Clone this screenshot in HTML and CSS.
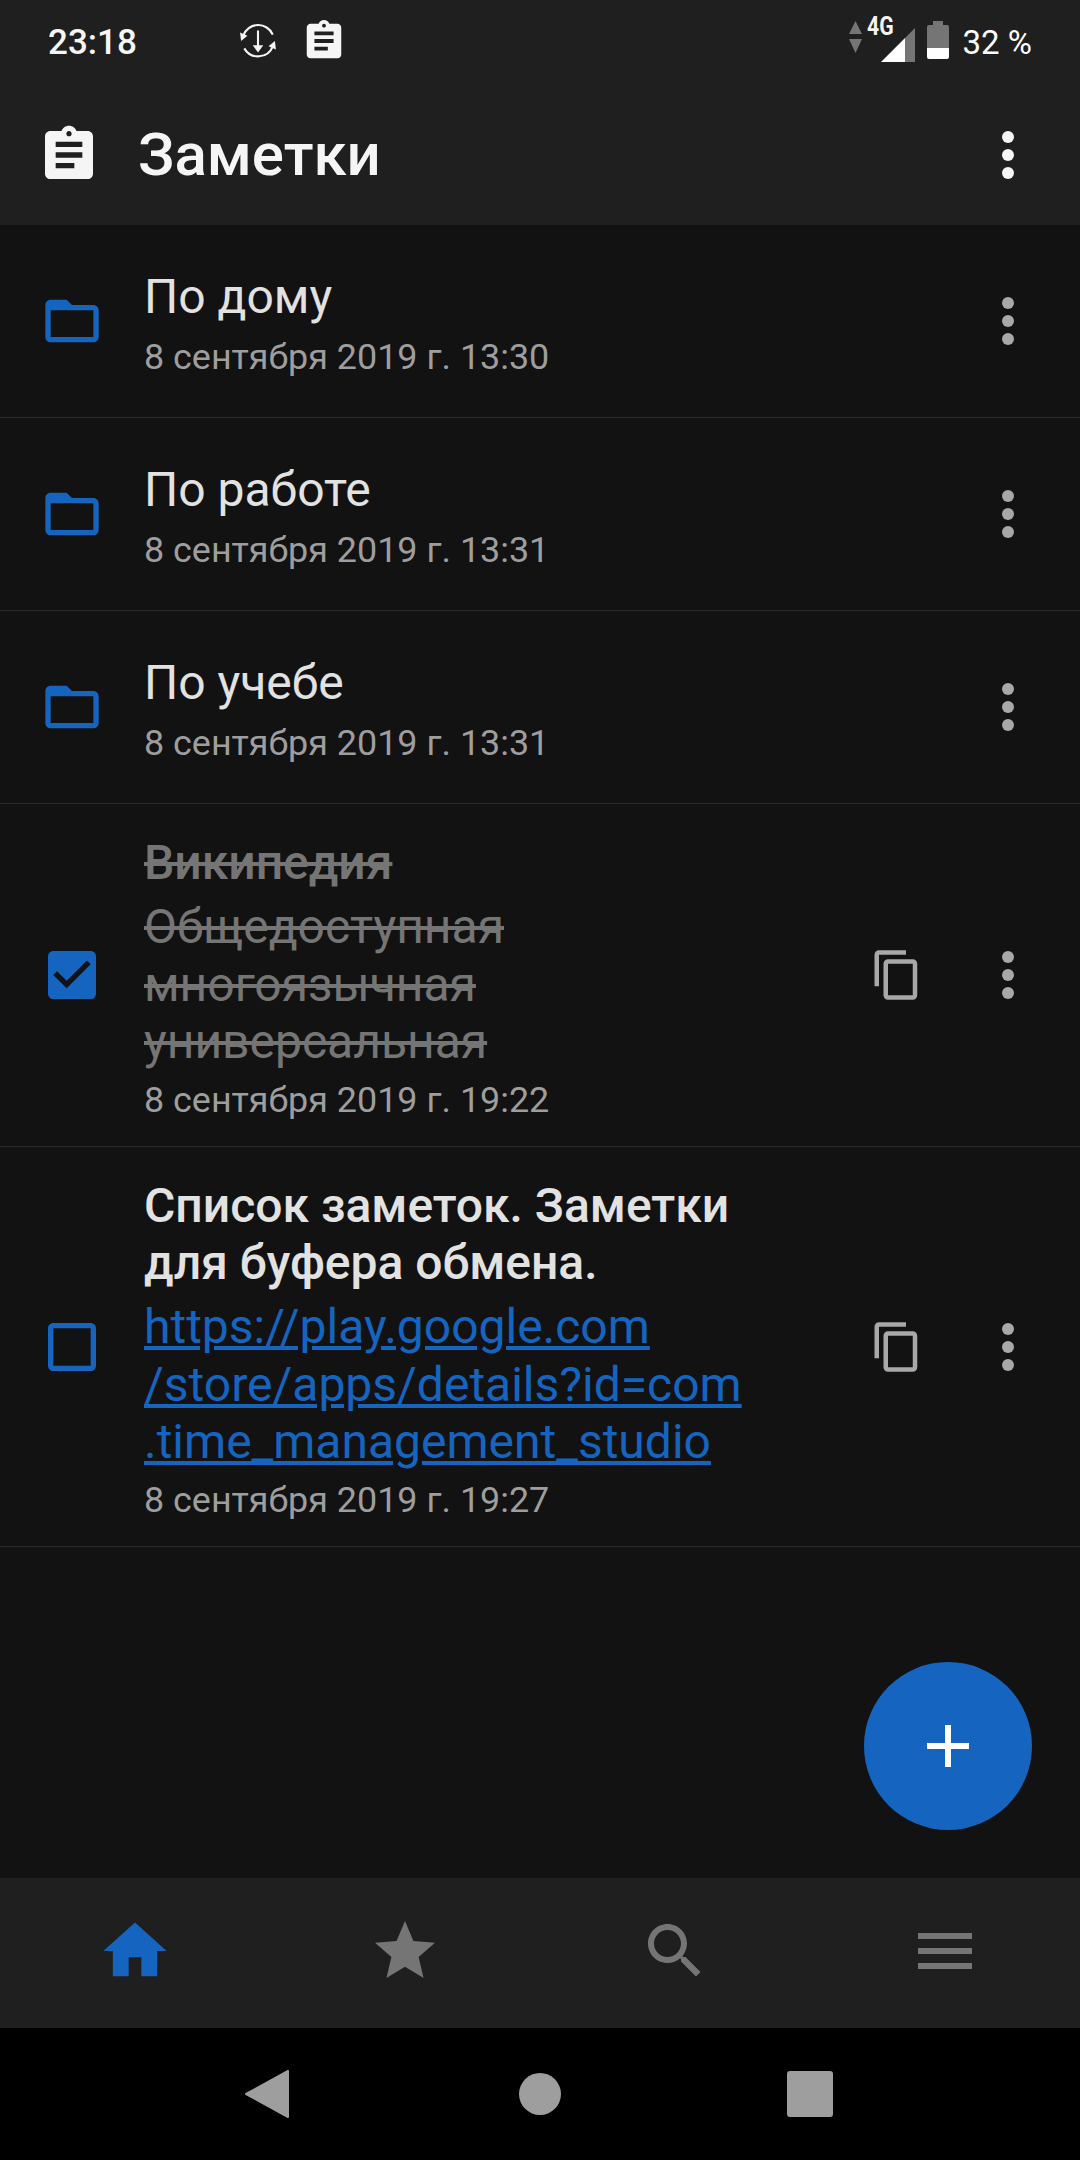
FILE: index.html
```html
<!DOCTYPE html>
<html>
<head>
<meta charset="utf-8">
<title>Заметки</title>
<link rel="stylesheet" href="styles.css">
</head>
<body>
<div id="main">

<div class="top">
  <div class="status">
    <span class="time">23:18</span>
    <svg class="ic-sync" viewBox="0 0 36 36" width="38" height="38">
      <path d="M4 13A15 15 0 0 1 32 12" fill="none" stroke="#f5f5f5" stroke-width="2"/>
      <path d="M32 23A15 15 0 0 1 5 25" fill="none" stroke="#f5f5f5" stroke-width="2"/>
      <path d="M1 10l7 3-6 5zM35 26l-7-3 6-5z" fill="#f5f5f5"/>
      <path d="M18 8v18" stroke="#f5f5f5" stroke-width="2"/>
      <path d="M13 22h10l-5 7z" fill="#f5f5f5"/>
    </svg>
    <svg class="ic-clip" viewBox="0 0 24 24" width="46" height="46"><path fill="#f5f5f5" d="M19 3h-4.180C14.400 1.840 13.300 1 12 1c-1.300 0-2.400.84-2.820 2H5c-1.100 0-2 .9-2 2v14c0 1.100.9 2 2 2h14c1.100 0 2-.9 2-2V5c0-1.100-.9-2-2-2zm-7 0c.55 0 1 .45 1 1s-.45 1-1 1-1-.45-1-1 .45-1 1-1zm2 14H7v-2h7v2zm3-4H7v-2h10v2zm0-4H7V7h10v2z"/></svg>
    <span class="spacer"></span>
    <svg class="ic-updown" viewBox="0 0 13 32" width="13" height="32"><path fill="#757575" d="M6.500 0L13 13H0zM0 18h13L6.500 32z"/></svg>
    <span class="net">
      <span class="fourg">4G</span>
      <svg class="ic-signal" viewBox="0 0 34 34" width="34" height="34">
        <path fill="#757575" d="M34 0V34H24V10z"/>
        <path fill="#ffffff" d="M24 10V34H0z"/>
      </svg>
    </span>
    <svg class="ic-batt" viewBox="0 0 22 38" width="22" height="38">
      <path fill="#757575" d="M6 0h10v4h4q2 0 2 2v22H0V6q0-2 2-2h4z"/>
      <path fill="#ffffff" d="M0 27h22v9q0 2-2 2H2q-2 0-2-2z"/>
    </svg>
    <span class="pct">32 %</span>
  </div>
  <div class="appbar">
    <svg class="ic-app" viewBox="0 0 24 24" width="64" height="64"><path fill="#f5f5f5" d="M19 3h-4.180C14.400 1.840 13.300 1 12 1c-1.300 0-2.400.84-2.820 2H5c-1.100 0-2 .9-2 2v14c0 1.100.9 2 2 2h14c1.100 0 2-.9 2-2V5c0-1.100-.9-2-2-2zm-7 0c.55 0 1 .45 1 1s-.45 1-1 1-1-.45-1-1 .45-1 1-1zm2 14H7v-2h7v2zm3-4H7v-2h10v2zm0-4H7V7h10v2z"/></svg>
    <span class="apptitle">Заметки</span>
    <svg class="more" viewBox="0 0 24 24" width="72" height="72"><circle cx="12" cy="6" r="2" fill="#f5f5f5"/><circle cx="12" cy="12" r="2" fill="#f5f5f5"/><circle cx="12" cy="18" r="2" fill="#f5f5f5"/></svg>
  </div>
</div>

<div class="list">

  <div class="row">
    <svg class="lead" viewBox="0 0 24 24" width="64" height="64"><path fill="#1565c0" d="M20 6h-8l-2-2H4c-1.100 0-1.990.9-1.990 2L2 18c0 1.100.9 2 2 2h16c1.100 0 2-.9 2-2V8c0-1.100-.9-2-2-2zm0 12H4V8h16v10z"/></svg>
    <div class="body">
      <div class="title">По дому</div>
      <div class="date">8 сентября 2019 г. 13:30</div>
    </div>
    <svg class="more" viewBox="0 0 24 24" width="72" height="72"><circle cx="12" cy="6" r="2" fill="#a8a8a8"/><circle cx="12" cy="12" r="2" fill="#a8a8a8"/><circle cx="12" cy="18" r="2" fill="#a8a8a8"/></svg>
  </div>

  <div class="row">
    <svg class="lead" viewBox="0 0 24 24" width="64" height="64"><path fill="#1565c0" d="M20 6h-8l-2-2H4c-1.100 0-1.990.9-1.990 2L2 18c0 1.100.9 2 2 2h16c1.100 0 2-.9 2-2V8c0-1.100-.9-2-2-2zm0 12H4V8h16v10z"/></svg>
    <div class="body">
      <div class="title">По работе</div>
      <div class="date">8 сентября 2019 г. 13:31</div>
    </div>
    <svg class="more" viewBox="0 0 24 24" width="72" height="72"><circle cx="12" cy="6" r="2" fill="#a8a8a8"/><circle cx="12" cy="12" r="2" fill="#a8a8a8"/><circle cx="12" cy="18" r="2" fill="#a8a8a8"/></svg>
  </div>

  <div class="row">
    <svg class="lead" viewBox="0 0 24 24" width="64" height="64"><path fill="#1565c0" d="M20 6h-8l-2-2H4c-1.100 0-1.990.9-1.990 2L2 18c0 1.100.9 2 2 2h16c1.100 0 2-.9 2-2V8c0-1.100-.9-2-2-2zm0 12H4V8h16v10z"/></svg>
    <div class="body">
      <div class="title">По учебе</div>
      <div class="date">8 сентября 2019 г. 13:31</div>
    </div>
    <svg class="more" viewBox="0 0 24 24" width="72" height="72"><circle cx="12" cy="6" r="2" fill="#a8a8a8"/><circle cx="12" cy="12" r="2" fill="#a8a8a8"/><circle cx="12" cy="18" r="2" fill="#a8a8a8"/></svg>
  </div>

  <div class="row note">
    <svg class="lead" viewBox="0 0 24 24" width="64" height="64"><path fill="#1565c0" d="M19 3H5c-1.100 0-2 .9-2 2v14c0 1.100.9 2 2 2h14c1.100 0 2-.9 2-2V5c0-1.100-.9-2-2-2z"/><path fill="#121212" d="M10 17l-5-5 1.410-1.410L10 14.170l7.590-7.590L19 8l-9 9z"/></svg>
    <div class="body">
      <div class="title bold done">Википедия</div>
      <div class="text done">Общедоступная<br>многоязычная<br>универсальная</div>
      <div class="date">8 сентября 2019 г. 19:22</div>
    </div>
    <svg class="copy" viewBox="0 0 24 24" width="54" height="54"><path fill="#a8a8a8" d="M16 1H4c-1.100 0-2 .9-2 2v14h2V3h12V1zm3 4H8c-1.100 0-2 .9-2 2v14c0 1.100.9 2 2 2h11c1.100 0 2-.9 2-2V7c0-1.100-.9-2-2-2zm0 16H8V7h11v14z"/></svg>
    <svg class="more" viewBox="0 0 24 24" width="72" height="72"><circle cx="12" cy="6" r="2" fill="#a8a8a8"/><circle cx="12" cy="12" r="2" fill="#a8a8a8"/><circle cx="12" cy="18" r="2" fill="#a8a8a8"/></svg>
  </div>

  <div class="row note">
    <svg class="lead" viewBox="0 0 24 24" width="64" height="64"><path fill="#1565c0" d="M19 5v14H5V5h14m0-2H5c-1.100 0-2 .9-2 2v14c0 1.100.9 2 2 2h14c1.100 0 2-.9 2-2V5c0-1.100-.9-2-2-2z"/></svg>
    <div class="body">
      <div class="title bold">Список заметок. Заметки<br>для буфера обмена.</div>
      <div class="text link">https://play.google.com<br>/store/apps/details?id=com<br>.time_management_studio</div>
      <div class="date">8 сентября 2019 г. 19:27</div>
    </div>
    <svg class="copy" viewBox="0 0 24 24" width="54" height="54"><path fill="#a8a8a8" d="M16 1H4c-1.100 0-2 .9-2 2v14h2V3h12V1zm3 4H8c-1.100 0-2 .9-2 2v14c0 1.100.9 2 2 2h11c1.100 0 2-.9 2-2V7c0-1.100-.9-2-2-2zm0 16H8V7h11v14z"/></svg>
    <svg class="more" viewBox="0 0 24 24" width="72" height="72"><circle cx="12" cy="6" r="2" fill="#a8a8a8"/><circle cx="12" cy="12" r="2" fill="#a8a8a8"/><circle cx="12" cy="18" r="2" fill="#a8a8a8"/></svg>
  </div>

  <div class="fab">
    <svg viewBox="0 0 24 24" width="72" height="72"><path fill="#ffffff" d="M19 13h-6v6h-2v-6H5v-2h6V5h2v6h6v2z"/></svg>
  </div>
</div>

<div class="tabs">
  <div class="tab"><svg viewBox="0 0 24 24" width="76" height="76"><path fill="#1565c0" d="M10 20v-6h4v6h5v-8h3L12 3 2 12h3v8z"/></svg></div>
  <div class="tab"><svg viewBox="0 0 24 24" width="72" height="72"><path fill="#757575" d="M12 17.270L18.180 21l-1.640-7.030L22 9.240l-7.190-.61L12 2 9.190 8.630 2 9.240l5.460 4.730L5.820 21z"/></svg></div>
  <div class="tab"><svg viewBox="0 0 24 24" width="72" height="72"><path fill="#757575" d="M15.500 14h-.79l-.28-.27C15.410 12.590 16 11.110 16 9.500 16 5.910 13.090 3 9.500 3S3 5.910 3 9.500 5.910 16 9.500 16c1.610 0 3.090-.59 4.230-1.570l.27.28v.79l5 4.990L20.490 19l-4.990-5zm-6 0C7.010 14 5 11.990 5 9.500S7.010 5 9.500 5 14 7.010 14 9.500 11.990 14 9.500 14z"/></svg></div>
  <div class="tab"><svg viewBox="0 0 24 24" width="72" height="72"><path fill="#757575" d="M3 18h18v-2H3v2zm0-5h18v-2H3v2zm0-7v2h18V6H3z"/></svg></div>
</div>

<div class="sysnav">
  <svg viewBox="0 0 44 48" width="44" height="48"><path fill="#9e9e9e" stroke="#9e9e9e" stroke-width="2" stroke-linejoin="round" d="M43 1V47L1 24z"/></svg>
  <span class="sys-home"></span>
  <span class="sys-recent"></span>
</div>

</div>
</body>
</html>
```

FILE: styles.css
```css
html, body {
  margin: 0;
  padding: 0;
  background-color: #121212;
}

#main {
  width: 1080px;
  height: 2160px;
  display: flex;
  flex-direction: column;
  font-family: Roboto, "Noto Sans", sans-serif;
}

svg {
  display: block;
  flex: none;
}

.top {
  background-color: #1f1f1f;
  height: 225px;
}

.status {
  height: 84px;
  display: flex;
  align-items: center;
  padding-left: 48px;
  padding-right: 48px;
  color: #f5f5f5;
}

.time {
  font-size: 35px;
  font-weight: 500;
  width: 183px;
}

.ic-clip {
  margin-left: 24px;
  margin-top: -3px;
}

.ic-sync {
  margin-left: 8px;
  margin-top: -3px;
}

.spacer {
  flex: 1;
}

.ic-updown {
  margin-top: -11px;
}

.net {
  position: relative;
  width: 47px;
  height: 34px;
  margin-left: 6px;
  margin-top: 6px;
}

.ic-signal {
  position: absolute;
  right: 0;
  top: 0;
}

.fourg {
  position: absolute;
  left: -1px;
  top: -16px;
  font-size: 25px;
  font-weight: 700;
  transform: scaleX(0.85);
  transform-origin: left;
}

.ic-batt {
  margin-left: 12px;
  margin-top: -4px;
}

.pct {
  font-size: 33px;
  font-weight: 400;
  margin-left: 14px;
  color: #ffffff;
}

.appbar {
  height: 141px;
  display: flex;
  align-items: center;
  padding-left: 37px;
}

.apptitle {
  font-size: 60px;
  font-weight: 500;
  color: #f5f5f5;
  margin-left: 37px;
  flex: 1;
}

.more {
  margin-right: 36px;
}

.list {
  flex: 1;
  position: relative;
}

.row {
  display: flex;
  align-items: center;
  padding: 43px 0 31px 0;
  border-bottom: 1px solid #2b2b2b;
}

.row.note {
  padding: 30px 0 17.500px 0;
}

.row > svg {
  margin-bottom: 12px;
}

.lead {
  margin-left: 40px;
  margin-right: 40px;
}

.body {
  flex: 1;
}

.title {
  font-size: 48px;
  line-height: 57px;
  color: #e2e2e2;
}

.bold {
  font-weight: 500;
}

.text {
  font-size: 48px;
  line-height: 57.500px;
  margin-top: 7px;
}

.date {
  font-size: 35.900px;
  line-height: 57px;
  margin-top: 4px;
  color: #9e9e9e;
}

.text + .date {
  margin-top: 1px;
}

.done {
  color: #757575;
  text-decoration: line-through;
}

.link {
  color: #1565c0;
  text-decoration: underline;
}

.copy {
  margin-right: 48px;
}

.fab {
  position: absolute;
  left: 864px;
  top: 1437px;
  width: 168px;
  height: 168px;
  border-radius: 50%;
  background-color: #1565c0;
  display: flex;
  align-items: center;
  justify-content: center;
}

.tabs {
  height: 146px;
  padding-bottom: 4px;
  background-color: #1f1f1f;
  display: flex;
}

.tab {
  flex: 1;
  display: flex;
  align-items: center;
  justify-content: center;
}

.sysnav {
  height: 132px;
  background-color: #000000;
  display: flex;
  align-items: center;
  justify-content: space-between;
  padding: 0 247px 0 245px;
}

.sys-home {
  width: 42px;
  height: 42px;
  margin-left: 4px;
  border-radius: 50%;
  background-color: #9e9e9e;
}

.sys-recent {
  width: 46px;
  height: 46px;
  border-radius: 3px;
  background-color: #9e9e9e;
}
```
